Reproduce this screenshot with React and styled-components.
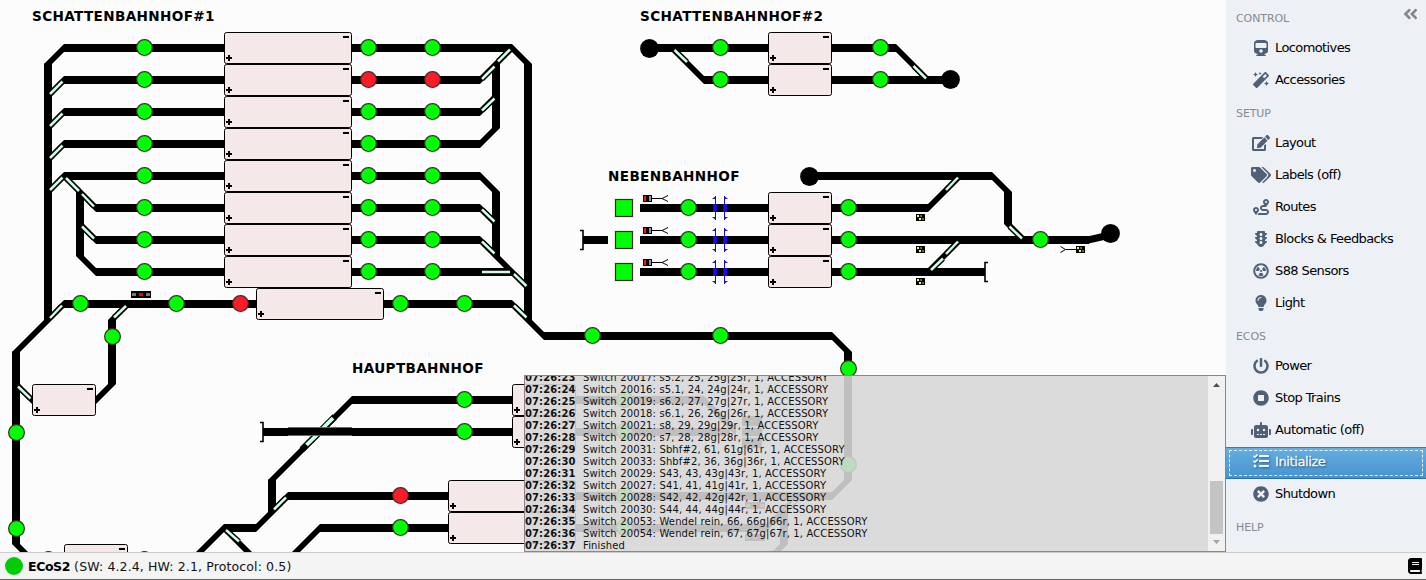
import React from "react";
import styled, { createGlobalStyle, css } from "styled-components";
import {
  FaTrain, FaMagic, FaEdit, FaTags, FaRoute, FaTrafficLight, FaRadiationAlt, FaLightbulb,
  FaPowerOff, FaStopCircle, FaRobot, FaTasks, FaTimesCircle, FaBook, FaAngleDoubleLeft,
} from "react-icons/fa";

const GlobalStyle = createGlobalStyle`
  * { box-sizing: border-box; }
  body { margin: 0; background: #fcfcfc; overflow: hidden; font-family: "DejaVu Sans", Verdana, sans-serif; }
`;

const Window = styled.div`
  display: flex;
  flex-direction: column;
  width: 1426px;
  height: 580px;
  overflow: hidden;
`;

const Main = styled.div`
  display: flex;
  height: 552px;
`;

const Workspace = styled.main`
  position: relative;
  width: 1226px;
  height: 552px;
  overflow: hidden;
  background: #fcfcfc;
`;

const Plan = styled.svg`
  display: block;
  font-family: "DejaVu Sans", Verdana, sans-serif;
`;

const PlanTitle = styled.text`
  font-size: 13.6px;
  font-weight: bold;
  fill: #000;
`;

const Console = styled.section`
  position: absolute;
  right: 0;
  bottom: 0;
  display: flex;
  width: 702px;
  height: 177px;
  border: 1px solid #8e8391;
  background: rgba(215, 215, 215, 0.89);
  overflow: hidden;
`;

const LogList = styled.div`
  flex: 1;
  display: flex;
  flex-direction: column;
  justify-content: flex-end;
`;

const LogRow = styled.div`
  display: flex;
  flex: none;
  height: 12px;
  font-size: 10px;
  line-height: 14px;
  white-space: pre;
  color: #111;
`;

const LogTime = styled.b`
  width: 58px;
  letter-spacing: 0.1px;
`;

const LogText = styled.span`
  letter-spacing: 0.13px;
`;

const Scrollbar = styled.div`
  display: flex;
  flex-direction: column;
  align-items: center;
  width: 17px;
  background: #f1f1f1;
`;

const ScrollSpace = styled.div`
  height: 88px;
`;

const ScrollThumb = styled.div`
  width: 13px;
  height: 53px;
  background: #c4c4c4;
`;

const ScrollArrow = styled.svg`
  flex: none;
  width: 17px;
  height: 17px;
  fill: ${(p) => (p.$dim ? "#a3a3a3" : "#505050")};
`;

const Sidebar = styled.nav`
  width: 200px;
  height: 552px;
  padding-top: 2px;
  background: #edf0f5;
`;

const SectionTitle = styled.div`
  display: flex;
  justify-content: space-between;
  height: 31px;
  padding: 0 8px 0 10px;
  font-size: 11px;
  line-height: 33px;
  color: #858b92;
  letter-spacing: -0.1px;

  svg { margin-top: 3px; width: 15px; height: 18px; color: #858585; }
`;

const MenuItem = styled.div`
  display: flex;
  height: 32px;
  padding: 0 0 3px 24px;
  align-items: center;
  gap: 3px;
  font-size: 13px;
  color: #000;
  letter-spacing: -0.6px;
  white-space: nowrap;

  ${(p) => p.$active && css`
    padding-bottom: 4px;
    color: #f6f9fb;
    background: linear-gradient(#66aee0, #4793cf);
    border-top: 1px solid #3478b4;
    border-bottom: 1px solid #2d6ca8;
    text-shadow: 1px 1px 2px #245;
    -webkit-text-stroke: 0.3px #f6f9fb;
    letter-spacing: -0.4px;
    outline: 1px dashed #e6f2fa;
    outline-offset: -4px;
  `}
`;

const MenuIcon = styled.span`
  display: flex;
  flex: none;
  width: 22px;
  justify-content: center;
  color: ${(p) => (p.$active ? "#f3f8fc" : "#4f6077")};

  svg {
    display: block;
    flex: none;
    width: ${(p) => p.$width || 16}px;
    height: 16px;
    ${(p) => p.$active && "filter: drop-shadow(1px 1px 1px #245a);"}
  }
`;

const StatusBar = styled.footer`
  display: flex;
  align-items: center;
  height: 28px;
  padding: 0 4px 0 5px;
  gap: 5px;
  background: #f4f4f4;
  border-top: 1px solid #ccc;
  border-bottom: 1px solid #646464;
  font-size: 12.5px;
  letter-spacing: 0.13px;
  color: #111;
`;

const StatusLamp = styled.span`
  width: 18px;
  height: 18px;
  border-radius: 50%;
  background: #00cc05;
`;

const StatusText = styled.span`
  flex: 1;
  padding-top: 1px;
  b { color: #000; letter-spacing: -0.4px; }
`;

const ManualIcon = styled(FaBook)`
  width: 16px;
  height: 16px;
  margin-right: -1px;
  color: #000;
`;

/* Straight piece, 8px wide, horizontal or vertical. */
const Straight = ({ p: [x1, y1, x2, y2] }) => (
  <line x1={x1} y1={y1} x2={x2} y2={y2} stroke="#000" strokeWidth="8" />
);

/* Diagonal piece; each end is cut to meet a horizontal ("h") or vertical ("v") straight. */
const Diagonal = ({ p: [x1, y1, x2, y2, ends = "hh"] }) => {
  const rising = (x2 - x1) * (y2 - y1) < 0;
  const cut = (x, y, kind) =>
    kind === "h" ? [[x, y - 4], [x, y + 4]] : rising ? [[x - 4, y], [x + 4, y]] : [[x + 4, y], [x - 4, y]];
  const [a, b] = cut(x1, y1, ends[0]);
  const [c, d] = cut(x2, y2, ends[1]);
  return <polygon points={[a, c, d, b].map((q) => q.join(",")).join(" ")} />;
};

const Blade = ({ p: [x1, y1, x2, y2] }) => (
  <g>
    <line x1={x1} y1={y1} x2={x2} y2={y2} stroke="#000" strokeWidth="5.4" />
    <line x1={x1} y1={y1} x2={x2} y2={y2} stroke="#ccffe3" strokeWidth="2.5" />
  </g>
);

const Block = ({ p: [x, y, w = 64] }) => (
  <g>
    <rect x={x + 0.5} y={y + 0.5} width={w - 1} height="31" rx="2" fill="#f4e9e8" stroke="#000" />
    <path d={`M${x + 2} ${y + 26}h6M${x + 5} ${y + 23}v6M${x + w - 9} ${y + 5}h6`} stroke="#000" strokeWidth="2" />
  </g>
);

const Lamp = ({ p: [x, y, red] }) => (
  <circle cx={x + 0.5} cy={y - 0.4} r="7.9" fill={red ? "#fb1d26" : "#00ff00"} stroke="#3c2a2a" strokeWidth="1.2" />
);

const Terminal = ({ x, y }) => <circle cx={x} cy={y} r="9.4" />;

const Buffer = ({ x, y, dir }) => (
  <path d={`M${x - 3 * dir} ${y - 9.5}h${3 * dir}v19h${-3 * dir}`} fill="none" stroke="#000" strokeWidth="1.6" />
);

const Bridge = ({ x, y }) => (
  <g fill="#1a0ae0">
    <rect x={x - 7} y={y - 4} width="4" height="8" />
    <rect x={x + 3} y={y - 4} width="4" height="8" />
    <rect x={x - 5} y={y - 12} width="1" height="24" />
    <rect x={x + 4} y={y - 12} width="1" height="24" />
    <path d={`M${x - 4} ${y - 12}v3h-4zM${x - 4} ${y + 12}v-3h-4zM${x + 4} ${y - 12}v3h4zM${x + 4} ${y + 12}v-3h4z`} />
  </g>
);

const Coupler = ({ x, y, flip }) => (
  <path
    d={flip ? `M${x + 16} ${y}h-11l-5 -3m5 3l-5 3` : `M${x} ${y}h10l6 -3m-6 3l6 3`}
    fill="none" stroke="#000" strokeWidth="1"
  />
);

const Decoupler = ({ y }) => (
  <g>
    <rect x="643" y={y - 13} width="9" height="7" />
    <rect x="644" y={y - 12} width="2" height="5" fill="#f01818" />
    <rect x="649" y={y - 12} width="2" height="5" fill="#999" />
    <Coupler x={652} y={y - 9.5} />
  </g>
);

const Signal = ({ x, y }) => (
  <g>
    <rect x={x} y={y} width="9" height="7" />
    <rect x={x + 1} y={y + 1} width="2" height="2" fill="#ffff40" />
    <rect x={x + 3} y={y + 4} width="2" height="2" fill="#ffff40" />
    <rect x={x + 4} y={y + 1} width="2" height="2" fill="#66632c" />
    <rect x={x + 6} y={y + 4} width="2" height="2" fill="#66632c" />
  </g>
);

const LightBar = ({ x, y }) => (
  <g>
    <rect x={x} y={y} width="20" height="7" />
    <rect x={x + 1} y={y + 2} width="4" height="3" fill="#777" />
    <rect x={x + 8} y={y + 2} width="4" height="3" fill="#f00" />
    <rect x={x + 15} y={y + 2} width="4" height="3" fill="#777" />
  </g>
);

const straights = [
  [64, 48, 512, 48], [64, 80, 480, 80], [64, 112, 480, 112], [64, 144, 480, 144], [64, 176, 480, 176],
  [96, 208, 480, 208], [96, 240, 480, 240], [96, 272, 512, 272], [64, 304, 512, 304],
  [48, 63.5, 48, 320], [80, 192, 80, 256], [16, 351.5, 16, 544], [112, 320, 112, 384],
  [496, 64, 496, 128], [496, 192, 496, 256], [528, 64, 528, 320],
  [544, 336, 832, 336], [848, 352, 848, 480], [575, 496, 832, 496],
  [649, 48, 896, 48], [704, 80, 950, 80],
  [809, 176, 992, 176], [1008, 192, 1008, 224], [640, 208, 928, 208], [640, 240, 1089, 240],
  [640, 272, 985, 272], [583, 240, 608, 240],
  [352, 400, 704, 400], [263, 432, 288, 432], [352, 432, 730, 432], [272, 479.5, 272, 512], [224, 528, 256, 528],
  [288, 496, 448, 496], [320, 528, 766, 528], [784, 512, 784, 544],
];

const diagonals = [
  [48, 64, 64, 48, "vh"], [48, 96, 64, 80, "vh"], [48, 128, 64, 112, "vh"], [48, 160, 64, 144, "vh"],
  [48, 192, 64, 176, "vh"], [64, 176, 80, 192, "hv"], [80, 192, 96, 208, "vh"], [80, 224, 96, 240, "vh"],
  [80, 256, 96, 272, "vh"], [48, 320, 64, 304, "vh"], [16, 352, 48, 320, "vv"], [112, 320, 128, 304, "vh"],
  [96, 400, 112, 384, "hv"], [16, 384, 32, 400, "vh"], [16, 544, 32, 560, "vh"],
  [512, 48, 528, 64, "hv"], [480, 80, 496, 64, "hv"], [496, 64, 512, 48, "vh"], [480, 112, 496, 96, "hv"],
  [480, 144, 496, 128, "hv"], [480, 176, 496, 192, "hv"], [480, 208, 496, 224, "hv"],
  [480, 240, 496, 256, "hv"], [496, 256, 512, 272, "vh"], [512, 272, 528, 288, "hv"],
  [512, 304, 528, 320, "hv"], [528, 320, 544, 336, "vh"], [832, 336, 848, 352, "hv"],
  [832, 496, 848, 480, "hv"], [672, 48, 704, 80], [896, 48, 928, 80],
  [928, 208, 960, 176], [992, 176, 1008, 192, "hv"], [1008, 224, 1024, 240, "vh"], [928, 272, 960, 240],
  [272, 480, 352, 400, "vh"], [256, 528, 272, 512, "hv"], [272, 512, 288, 496, "vh"],
  [192, 560, 224, 528], [224, 528, 256, 560], [288, 560, 320, 528],
  [704, 400, 736, 432], [768, 560, 784, 544, "hv"], [766, 528, 798, 496],
];

const blades = [
  [50, 94, 62.5, 81.5], [50, 126, 62.5, 113.5], [50, 158, 62.5, 145.5], [50, 190, 62.5, 177.5],
  [66, 178, 79, 191], [82, 194, 94, 206.5], [82, 226.5, 94, 238.5],
  [50, 318, 62, 305.5], [114, 317.5, 126, 306], [18, 386.5, 30.5, 398.5],
  [482, 79, 494.5, 66.5], [498, 61.5, 510, 49.5], [482, 110.5, 494.5, 98.5],
  [482, 209.5, 494.5, 221.5], [482, 241.5, 494.5, 253.5], [482, 272, 510, 272],
  [514, 274, 526.5, 286], [514, 305.5, 526.5, 317.5],
  [674.5, 50, 687, 62], [913.5, 66, 926, 78.5],
  [946, 190, 958, 177.5], [931, 270, 943, 258.5], [946, 254, 958, 241.5], [1009.5, 226.5, 1022, 238.5],
  [274, 509.5, 286, 497.5], [226, 530, 239, 541.5], [786, 510, 797, 499],
];

const blocks = [
  ...[32, 64, 96, 128, 160, 192, 224, 256].map((y) => [224, y, 128]),
  [256, 288, 128], [32, 384], [64, 544], [768, 32], [768, 64], [768, 192], [768, 224], [768, 256],
  [512, 384], [512, 416], [448, 480, 128], [448, 512, 128],
];

const lamps = [
  ...[48, 80, 112, 144, 176, 208, 240, 272].flatMap((y) => [[144, y], [368, y, y === 80], [432, y, y === 80]]),
  [80, 304], [176, 304], [240, 304, true], [400, 304], [464, 304], [112, 337], [16, 433], [16, 529],
  [48, 560], [144, 560], [592, 336], [720, 336], [848, 369], [848, 465],
  [720, 48], [880, 48], [720, 80], [880, 80],
  [688, 208], [848, 208], [688, 240], [848, 240], [688, 272], [848, 272], [1040, 240],
  [464, 400], [464, 432], [400, 496, true], [400, 528],
  [624, 400], [624, 432], [624, 496], [624, 528],
];

const titles = [
  [32, 21, 182.5, "SCHATTENBAHNHOF#1"],
  [640, 21, 183, "SCHATTENBAHNHOF#2"],
  [608, 181, 131.5, "NEBENBAHNHOF"],
  [352, 373, 131.5, "HAUPTBAHNHOF"],
];

const TrackPlan = () => (
  <Plan width="1226" height="552" viewBox="0 0 1226 552">
    {straights.map((p, i) => <Straight key={i} p={p} />)}
    {diagonals.map((p, i) => <Diagonal key={i} p={p} />)}
    <path d="M1088 240L1110 235" stroke="#000" strokeWidth="7" />
    {blades.map((p, i) => <Blade key={i} p={p} />)}
    <path d="M322 429.5L335 416.5M302 449.5L318.5 433" stroke="#000" strokeWidth="6.6" />
    <path d="M322 429L333 418.2M306.5 445L318 433.8" stroke="#ccffe3" strokeWidth="3.8" />
    <path d="M288 427.5h64M288 435.5h64" stroke="#666" />
    <path d="M288 431.5h64" stroke="#000" strokeWidth="7" />
    {blocks.map((p, i) => <Block key={i} p={p} />)}
    {lamps.map((p, i) => <Lamp key={i} p={p} />)}
    <Terminal x={649.5} y={48.5} />
    <Terminal x={950.5} y={79.5} />
    <Terminal x={809.5} y={176.5} />
    <Terminal x={1110.5} y={233.5} />
    <Buffer x={583} y={240} dir={1} />
    <Buffer x={263} y={432} dir={1} />
    <Buffer x={985} y={272} dir={-1} />
    {[208, 240, 272].map((y) => (
      <g key={y}>
        <rect x="615.5" y={y - 8.5} width="17" height="17" fill="#00ff00" stroke="#3c2a2a" strokeWidth="1.2" />
        <Decoupler y={y} />
        <Bridge x={720} y={y} />
        <Signal x={916} y={y + 6} />
      </g>
    ))}
    <Signal x={1076} y={246} />
    <Coupler x={1060.5} y={249.5} flip />
    <LightBar x={131} y={291} />
    <LightBar x={745} y={502} />
    <LightBar x={745} y={534} />
    <rect x="742" y="416" width="20" height="32" />
    <path d="M734 427h30M734 437h30" stroke="#ccffe3" strokeWidth="2" />
    {titles.map(([x, y, w, t]) => (
      <PlanTitle key={t} x={x} y={y} textLength={w}>{t}</PlanTitle>
    ))}
  </Plan>
);

const log = [
  ["07:26:23", "Switch 20017: s5.2, 25, 25g|25r, 1, ACCESSORY"],
  ["07:26:24", "Switch 20016: s5.1, 24, 24g|24r, 1, ACCESSORY"],
  ["07:26:25", "Switch 20019: s6.2, 27, 27g|27r, 1, ACCESSORY"],
  ["07:26:26", "Switch 20018: s6.1, 26, 26g|26r, 1, ACCESSORY"],
  ["07:26:27", "Switch 20021: s8, 29, 29g|29r, 1, ACCESSORY"],
  ["07:26:28", "Switch 20020: s7, 28, 28g|28r, 1, ACCESSORY"],
  ["07:26:29", "Switch 20031: Sbhf#2, 61, 61g|61r, 1, ACCESSORY"],
  ["07:26:30", "Switch 20033: Shbf#2, 36, 36g|36r, 1, ACCESSORY"],
  ["07:26:31", "Switch 20029: S43, 43, 43g|43r, 1, ACCESSORY"],
  ["07:26:32", "Switch 20027: S41, 41, 41g|41r, 1, ACCESSORY"],
  ["07:26:33", "Switch 20028: S42, 42, 42g|42r, 1, ACCESSORY"],
  ["07:26:34", "Switch 20030: S44, 44, 44g|44r, 1, ACCESSORY"],
  ["07:26:35", "Switch 20053: Wendel rein, 66, 66g|66r, 1, ACCESSORY"],
  ["07:26:36", "Switch 20054: Wendel rein, 67, 67g|67r, 1, ACCESSORY"],
  ["07:26:37", "Finished"],
];

const menu = [
  ["CONTROL", [{ label: "Locomotives", Icon: FaTrain }, { label: "Accessories", Icon: FaMagic }]],
  ["SETUP", [
    { label: "Layout", Icon: FaEdit, width: 18 },
    { label: "Labels (off)", Icon: FaTags, width: 20 },
    { label: "Routes", Icon: FaRoute },
    { label: "Blocks & Feedbacks", Icon: FaTrafficLight },
    { label: "S88 Sensors", Icon: FaRadiationAlt },
    { label: "Light", Icon: FaLightbulb },
  ]],
  ["ECOS", [
    { label: "Power", Icon: FaPowerOff },
    { label: "Stop Trains", Icon: FaStopCircle },
    { label: "Automatic (off)", Icon: FaRobot, width: 20 },
    { label: "Initialize", Icon: FaTasks, active: true },
    { label: "Shutdown", Icon: FaTimesCircle },
  ]],
  ["HELP", []],
];

export default function App() {
  return (
    <Window>
      <GlobalStyle />
      <Main>
        <Workspace>
          <TrackPlan />
          <Console>
            <LogList>
              {log.map(([time, text]) => (
                <LogRow key={time}>
                  <LogTime>{time}</LogTime>
                  <LogText>{text}</LogText>
                </LogRow>
              ))}
            </LogList>
            <Scrollbar>
              <ScrollArrow viewBox="0 0 17 17"><path d="M5 11l3.5-4 3.5 4z" /></ScrollArrow>
              <ScrollSpace />
              <ScrollThumb />
              <ScrollArrow $dim viewBox="0 0 17 17"><path d="M5 6l3.5 4L12 6z" /></ScrollArrow>
            </Scrollbar>
          </Console>
        </Workspace>
        <Sidebar>
          {menu.map(([title, items], i) => (
            <React.Fragment key={title}>
              <SectionTitle>
                {title}
                {i === 0 && <FaAngleDoubleLeft />}
              </SectionTitle>
              {items.map(({ label, Icon, width, active }) => (
                <MenuItem key={label} $active={active}>
                  <MenuIcon $active={active} $width={width}><Icon /></MenuIcon>
                  {label}
                </MenuItem>
              ))}
            </React.Fragment>
          ))}
        </Sidebar>
      </Main>
      <StatusBar>
        <StatusLamp />
        <StatusText><b>ECoS2</b> (SW: 4.2.4, HW: 2.1, Protocol: 0.5)</StatusText>
        <ManualIcon />
      </StatusBar>
    </Window>
  );
}
